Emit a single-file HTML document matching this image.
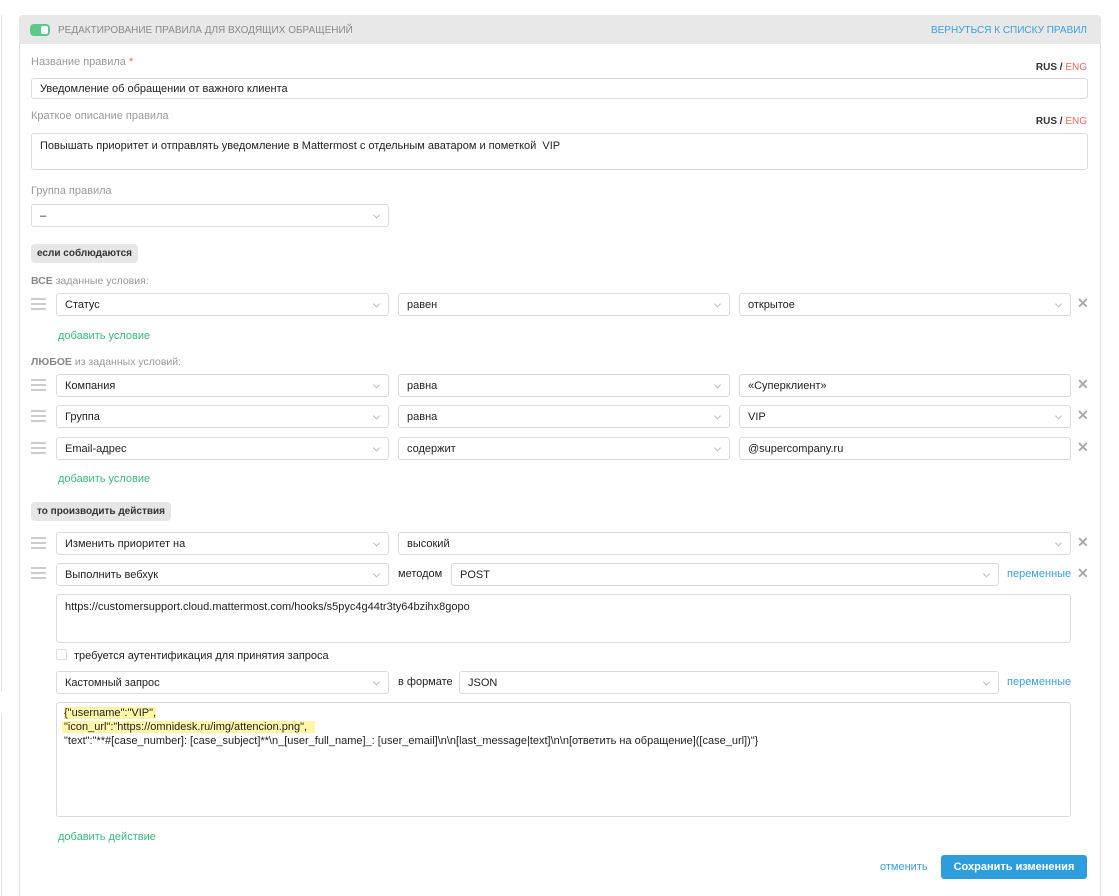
<!DOCTYPE html>
<html><head><meta charset="utf-8"><style>
*{box-sizing:border-box;margin:0;padding:0}
html,body{width:1119px;height:896px;overflow:hidden}
body{background:#fff;position:relative;font-family:"Liberation Sans","Noto Sans CJK SC",sans-serif;font-size:11px;color:#222}
.a{position:absolute;white-space:nowrap}
.panel{position:absolute;left:19px;top:15px;width:1082px;height:900px;border:1px solid #e0e0e0;border-radius:4px;background:#fff}
.hdr{position:absolute;left:19px;top:15px;width:1082px;height:29px;background:#e8e8e8;border-radius:4px 4px 0 0}
.box{position:absolute;border:1px solid #dadada;border-radius:3px;background:#fff;padding-left:8px;color:#222;font-size:11px;white-space:nowrap}
.sel:after{content:"";position:absolute;right:9px;top:50%;width:4px;height:4px;border-right:1px solid #bbb;border-bottom:1px solid #bbb;transform:translateY(-70%) rotate(45deg)}
.lbl{color:#999;font-size:11px}
.lang{font-size:10px;font-weight:bold;color:#333}
.lang span{color:#f06a5e;font-weight:normal}
.badge{position:absolute;background:#e6e6e6;border-radius:4px;font-weight:bold;font-size:10px;color:#333;padding:0 6px;line-height:19px;height:19px}
.h{position:absolute;left:31px;width:15px;height:12px;border-top:2px solid #ccc;border-bottom:2px solid #ccc}
.h:after{content:"";position:absolute;left:0;right:0;top:3px;border-top:2px solid #ccc}
.x{position:absolute;color:#aaa;font-size:14px;font-weight:bold;left:1077px}
.green{color:#3cb97a;font-size:11px}
.blue{color:#3a9fdb;font-size:11px}
.hl{background:#fff7a8}
.r{line-height:23px}
</style></head><body>
<div class="a" style="left:1px;top:15px;height:677px;border-left:1px solid #e4e4e4"></div>
<div class="a" style="left:1px;top:714px;height:200px;border-left:1px solid #e4e4e4"></div>
<div class="panel"></div>
<div class="hdr"></div>
<div class="a" style="left:30px;top:24px;width:20px;height:12px;border-radius:4px;background:#5cc98a"></div>
<div class="a" style="left:41px;top:26px;width:7px;height:8px;border-radius:2px;background:#fff"></div>
<div class="a" style="left:58px;top:24px;font-size:10px;color:#8a8a8a;line-height:13px">РЕДАКТИРОВАНИЕ ПРАВИЛА ДЛЯ ВХОДЯЩИХ ОБРАЩЕНИЙ</div>
<div class="a" style="right:32px;top:24px;font-size:10px;color:#3a9fdb;line-height:13px">ВЕРНУТЬСЯ К СПИСКУ ПРАВИЛ</div>

<div class="a lbl" style="left:31px;top:56px">Название правила <span style="color:#f06a5e">*</span></div>
<div class="a lang" style="right:32px;top:62px">RUS / <span>ENG</span></div>
<div class="box" style="left:31px;top:78px;width:1057px;height:21px;line-height:21px">Уведомление об обращении от важного клиента</div>

<div class="a lbl" style="left:31px;top:110px">Краткое описание правила</div>
<div class="a lang" style="right:32px;top:116px">RUS / <span>ENG</span></div>
<div class="box" style="left:31px;top:133px;width:1057px;height:37px;padding-top:5px;line-height:14px">Повышать приоритет и отправлять уведомление в Mattermost с отдельным аватаром и пометкой &nbsp;VIP</div>

<div class="a lbl" style="left:31px;top:185px">Группа правила</div>
<div class="box sel r" style="left:31px;top:204px;width:358px;height:23px">–</div>

<div class="badge" style="left:31px;top:244px">если соблюдаются</div>
<div class="a lbl" style="left:31px;top:275px;font-size:10.5px"><b style="color:#888">ВСЕ</b> заданные условия:</div>

<div class="h" style="top:298px"></div>
<div class="box sel r" style="left:56px;top:293px;width:333px;height:23px">Статус</div>
<div class="box sel r" style="left:398px;top:293px;width:332px;height:23px">равен</div>
<div class="box sel r" style="left:739px;top:293px;width:332px;height:23px">открытое</div>
<div class="x" style="top:295px">✕</div>
<div class="a green" style="left:58px;top:330px">добавить условие</div>

<div class="a lbl" style="left:31px;top:356px;font-size:10.5px"><b style="color:#888">ЛЮБОЕ</b> из заданных условий:</div>
<div class="h" style="top:379px"></div>
<div class="box sel r" style="left:56px;top:374px;width:333px;height:23px">Компания</div>
<div class="box sel r" style="left:398px;top:374px;width:332px;height:23px">равна</div>
<div class="box r" style="left:739px;top:374px;width:332px;height:23px">«Суперклиент»</div>
<div class="x" style="top:376px">✕</div>
<div class="h" style="top:410px"></div>
<div class="box sel r" style="left:56px;top:405px;width:333px;height:23px">Группа</div>
<div class="box sel r" style="left:398px;top:405px;width:332px;height:23px">равна</div>
<div class="box sel r" style="left:739px;top:405px;width:332px;height:23px">VIP</div>
<div class="x" style="top:407px">✕</div>
<div class="h" style="top:442px"></div>
<div class="box sel r" style="left:56px;top:437px;width:333px;height:23px">Email-адрес</div>
<div class="box sel r" style="left:398px;top:437px;width:332px;height:23px">содержит</div>
<div class="box r" style="left:739px;top:437px;width:332px;height:23px">@supercompany.ru</div>
<div class="x" style="top:439px">✕</div>
<div class="a green" style="left:58px;top:473px">добавить условие</div>

<div class="badge" style="left:31px;top:502px">то производить действия</div>
<div class="h" style="top:537px"></div>
<div class="box sel r" style="left:56px;top:532px;width:333px;height:23px">Изменить приоритет на</div>
<div class="box sel r" style="left:398px;top:532px;width:673px;height:23px">высокий</div>
<div class="x" style="top:534px">✕</div>

<div class="h" style="top:567px"></div>
<div class="box sel r" style="left:56px;top:563px;width:333px;height:23px">Выполнить вебхук</div>
<div class="a" style="left:398px;top:568px">методом</div>
<div class="box sel r" style="left:451px;top:563px;width:548px;height:23px">POST</div>
<div class="a blue" style="left:1007px;top:568px">переменные</div>
<div class="x" style="top:565px">✕</div>
<div class="box" style="left:56px;top:594px;width:1015px;height:49px;padding-top:5px;line-height:14px">https://customersupport.cloud.mattermost.com/hooks/s5pyc4g44tr3ty64bzihx8gopo</div>
<div class="a" style="left:56px;top:649px;width:11px;height:11px;border:1px solid #ddd;border-radius:2px"></div>
<div class="a" style="left:74px;top:650px">требуется аутентификация для принятия запроса</div>
<div class="box sel r" style="left:56px;top:671px;width:333px;height:23px">Кастомный запрос</div>
<div class="a" style="left:398px;top:676px">в формате</div>
<div class="box sel r" style="left:459px;top:671px;width:540px;height:23px">JSON</div>
<div class="a blue" style="left:1007px;top:676px">переменные</div>
<div class="box" style="left:56px;top:702px;width:1015px;height:115px"></div>
<div class="a" style="left:64px;top:706px;line-height:14px;font-size:11px"><span class="hl">{"username":"VIP",</span><br><span class="hl" style="margin-left:-2px;padding:0 8px 0 2px">"icon_url":"https://omnidesk.ru/img/attencion.png",</span><br>"text":"**#[case_number]: [case_subject]**\n_[user_full_name]_: [user_email]\n\n[last_message|text]\n\n[ответить на обращение]([case_url])"}</div>
<div class="a green" style="left:58px;top:831px">добавить действие</div>

<div class="a blue" style="left:880px;top:861px">отменить</div>
<div class="a" style="left:941px;top:855px;width:146px;height:24px;background:#2e9ddb;border-radius:3px;color:#fff;font-weight:bold;font-size:11px;text-align:center;line-height:24px">Сохранить изменения</div>
</body></html>
